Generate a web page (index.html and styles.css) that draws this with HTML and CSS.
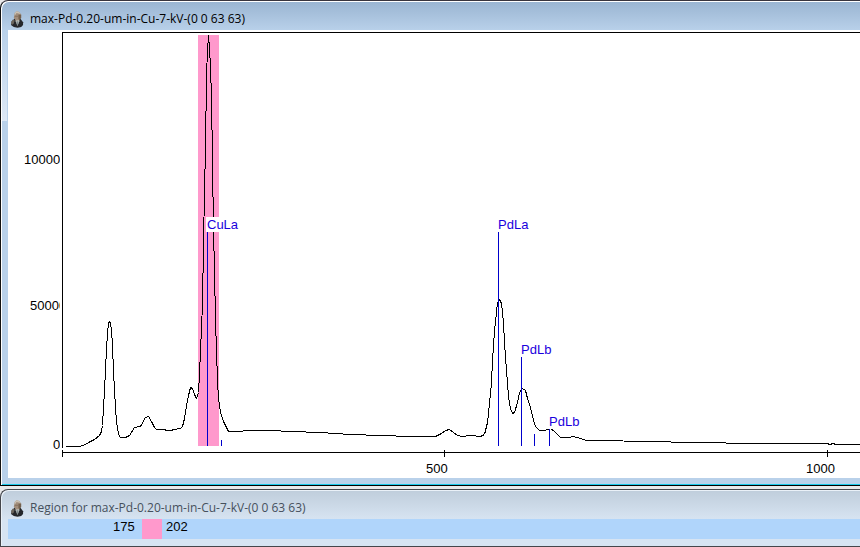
FILE: index.html
```html
<!DOCTYPE html>
<html lang="en">
<head>
<meta charset="utf-8">
<title>Spectrum viewer</title>
<link rel="stylesheet" href="styles.css">
</head>
<body>
<svg class="symbols" aria-hidden="true">
  <symbol id="portrait" viewBox="0 0 14 18">
    <path d="M4 8 1 11 0 15 3 17 7 18 11 17 13 15 13 12 10 8Z" fill="#25272b"/>
    <path d="M0 12 2 9 4 10 3 13 1 15Z" fill="#6b655c"/>
    <path d="M5 9 5 11 7 16 9 11 9 9Z" fill="#c3cbc8"/>
    <path d="M6 11 6 13 7 16 8 13 8 11Z" fill="#7d878a"/>
    <path d="M4 2 6 0 9 1 11 4 10 8 8 10 5 10 3 7Z" fill="#a18d7b"/>
    <path d="M4 2 6 0 9 1 10 3 6 2 4 5Z" fill="#c9c0b3"/>
    <path d="M8 4 11 4 11 7 9 10 8 8Z" fill="#75624f"/>
    <path d="M4 5H8V6H4Z" fill="#85705f"/>
  </symbol>
</svg>
<main class="desktop">
  <section class="window active">
    <header class="titlebar">
      <svg class="icon" aria-hidden="true"><use href="#portrait"/></svg>
      <h1>max-Pd-0.20-um-in-Cu-7-kV-(0 0 63 63)</h1>
    </header>
    <div class="frame">
      <svg class="plot" role="img" aria-label="X-ray spectrum">
        <defs><clipPath id="gutter"><rect x="8" y="30" width="52" height="448"/></clipPath></defs>
        <g transform="translate(-8 -30)">
          <rect class="region" x="198" y="35" width="21" height="411"/>
          <path class="axis" d="M62.5 448V32.5H4000M62.5 450V457M62 452.5H4000M444.5 450V457M827.5 450V457"/>
          <path class="marker" d="M207.5 232V446M221.5 440V446"/>
          <path class="trace" transform="translate(.5 .5)" d="M65 446H78L83 445 88 442 94 439 99 435 101 431 102 425 103 407 104 391 105 369 106 348 107 333 108 323 109 321 110 322 111 331 112 344 113 372 114 389 115 407 116 421 118 434 120 437H125L129 435 134 427 140 426 145 417 148 416 151 421 154 427 156 429 164 429 166 430 171 430 173 429 180 428 182 426 184 418 186 405 188 395 190 387 192 388 194 394 196 398 198 392 199 373 200 350 201 328 202 303 203 244 204 190 205 148 206 75 207 50 208 35 209 47 210 68 211 97 212 160 213 230 214 270 215 320 216 350 217 380 218 398 220 412 223 421 228 431 235 431 250 430 270 430 290 431 320 432 350 434 380 435 410 436 435 436 441 433 445 430 449 429 453 432 457 435 462 436 470 435 480 436 484 434 487 422 489 403 491 382 492 360 493 346 494 330 496 312 497 302 499 299 501 303 503 322 504 342 506 370 508 396 510 408 512 413 514 412 517 402 519 392 522 388 525 390 527 398 530 407 532 416 535 426 539 430 544 430 550 428 554 431 560 437 568 437 573 436 580 438 586 440 605 440 640 441 700 442 750 443 827 443 829 444 833 443 835 444H4000"/>
          <path class="marker" d="M498.5 232V446M521.5 357V446M534.5 434V446M549.5 429V446"/>
          <rect class="label-back" x="206" y="217" width="32" height="15"/>
          <rect class="label-back" x="549" y="414" width="30" height="15"/>
          <g class="label"><text x="207" y="229">CuLa</text><text x="498" y="229">PdLa</text><text x="521" y="354">PdLb</text><text x="549" y="426">PdLb</text></g>
          <g class="scale" clip-path="url(#gutter)"><text x="24" y="164">10000</text><text x="30" y="310">50000</text><text x="53" y="449">0</text></g>
          <g class="scale"><text x="426" y="473">500</text><text x="806" y="473">1000</text></g>
        </g>
      </svg>
    </div>
  </section>
  <section class="window inactive">
    <header class="titlebar">
      <svg class="icon" aria-hidden="true"><use href="#portrait"/></svg>
      <h2>Region for max-Pd-0.20-um-in-Cu-7-kV-(0 0 63 63)</h2>
    </header>
    <div class="range"><span class="start">175</span><i class="swatch"></i><span class="end">202</span></div>
  </section>
</main>
</body>
</html>
```
FILE: styles.css
```css
* { box-sizing: border-box; }
body { margin: 0; background: #e9e9eb; overflow: hidden; }
.symbols { position: absolute; width: 0; height: 0; }
.desktop { display: grid; gap: 3px; }
.window { border-radius: 8px 0 0 0; }
.active {
  border-left: 1px solid #111;
  border-top: 1px solid #38343d;
  border-bottom: 1px solid #000;
  box-shadow: inset 1px 1px #fff, inset 0 -1px #19c8e8;
  background: linear-gradient(#99b4d1, #b9d1ea 30px);
}
.inactive {
  border-left: 1px solid #45464b;
  border-top: 1px solid #45464b;
  border-bottom: 1px solid #45464b;
  padding-bottom: 7px;
  background: linear-gradient(#bfcddb, #d7e4f2 30px);
  box-shadow: inset 1px 1px #eaf1f8;
}
.titlebar { display: flex; align-items: center; gap: 6px; height: 29px; padding: 7px 0 0 10px; }
.icon { width: 13px; height: 17px; flex: none; }
h1, h2 { margin: 0; font: 12px/16px "Open Sans", "Noto Sans", sans-serif; white-space: nowrap; }
h1 { color: #000; }
h2 { color: #46505c; }
.frame {
  padding: 0 0 7px 7px;
  background: linear-gradient(#b9d1ea, #dde8f5) 1px 0 / 5px 91px no-repeat;
}
.plot { display: block; width: 100%; height: 448px; background: #fff; }
.region { fill: #ff99cc; }
.axis, .marker, .trace { fill: none; stroke: #000; stroke-width: 1px; }
.axis, .marker { shape-rendering: crispEdges; }
.marker { stroke: #0000cc; }
.trace { stroke-linejoin: round; shape-rendering: crispEdges; }
.label-back { fill: #fff; }
.label, .scale { font: 13px "Liberation Sans", Arial, sans-serif; }
.label { fill: #1a00dd; }
.scale { fill: #000; }
.range {
  display: flex;
  height: 20px;
  margin-left: 7px;
  padding-left: 105px;
  background: #b0d5fb;
  font: 13px/16px "Liberation Sans", Arial, sans-serif;
}
.start { width: 29px; }
.swatch { width: 20px; background: #ff99cc; }
.end { padding-left: 4px; }
```
